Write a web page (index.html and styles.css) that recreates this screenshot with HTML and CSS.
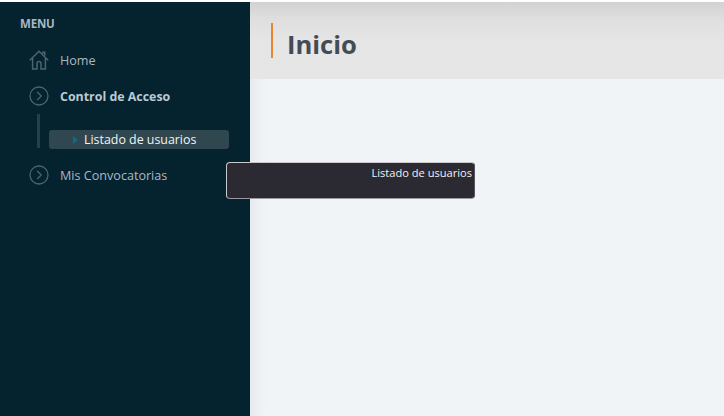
FILE: index.html
```html
<!DOCTYPE html>
<html lang="es">
<head>
<meta charset="utf-8">
<title>Inicio</title>
<link rel="stylesheet" href="styles.css">
</head>
<body>
<div class="app">
  <aside class="sidebar">
    <div class="menu-title">MENU</div>
    <nav class="nav">
      <a class="nav-item home">
        <svg class="icon" viewBox="0 0 20 20" fill="none" stroke="#4b6472" stroke-width="1.5"><path d="M0.8 10.2 10 1.2l9.2 9M3.6 8v11h4.4v-5.4a2 2 0 0 1 4 0V19h4.4V8M13.8 3.8V2.2h2v3.4"/></svg>
        <span>Home</span>
      </a>
      <a class="nav-item access">
        <svg class="icon" viewBox="0 0 20 20" fill="none" stroke="#4b6472" stroke-width="1.3"><circle cx="10" cy="10" r="9"/><path d="M8.2 6l4 4-4 4"/></svg>
        <strong>Control de Acceso</strong>
      </a>
      <div class="submenu">
        <a class="sub-item"><i class="arrow"></i><span>Listado de usuarios</span></a>
      </div>
      <a class="nav-item calls">
        <svg class="icon" viewBox="0 0 20 20" fill="none" stroke="#4b6472" stroke-width="1.3"><circle cx="10" cy="10" r="9"/><path d="M8.2 6l4 4-4 4"/></svg>
        <span>Mis Convocatorias</span>
      </a>
    </nav>
  </aside>
  <main class="content">
    <header class="page-head">
      <h1>Inicio</h1>
    </header>
  </main>
  <div class="tooltip">Listado de usuarios</div>
</div>
</body>
</html>
```
FILE: styles.css
```css
* { box-sizing: border-box; }
html, body { margin: 0; height: 100%; overflow: hidden; background: #fff; }
body { font-family: "Open Sans", "Noto Sans", sans-serif; }
.app { position: relative; display: flex; height: 416px; padding-top: 2px; }
.sidebar { width: 250px; flex: none; background: #05222f; padding: 14px 0 0 20px; }
.menu-title { font-size: 11.5px; line-height: 16px; font-weight: 700; color: #a9b7c0; letter-spacing: -0.2px; }
.nav { display: flex; flex-direction: column; margin-top: 18px; }
.nav-item { display: flex; align-items: center; gap: 11px; height: 20px; margin-left: 9px; font-size: 12.6px; color: #a9b9c4; }
.nav-item strong { font-weight: 700; font-size: 12.4px; color: #bccad3; }
.icon { width: 20px; height: 20px; flex: none; }
.home { margin-bottom: 16px; }
.submenu { margin: 8px 0 17px 17px; height: 34px; border-left: 3px solid #24404d; position: relative; }
.sub-item { position: absolute; left: 9px; top: 16px; width: 180px; height: 19px; border-radius: 3px; background: #31474f; color: #f0f4f6; font-size: 12.4px; line-height: 19px; display: flex; align-items: center; padding-left: 24px; }
.arrow { width: 0; height: 0; border-left: 5px solid #0d6b8f; border-top: 4px solid transparent; border-bottom: 4px solid transparent; margin-right: 6px; }
.content { flex: 1; background: #f0f4f7; box-shadow: inset 14px 0 14px -10px #e4e6e9; }
.page-head { height: 77px; background: linear-gradient(#d2d2d2, #dfdfdf 22%, #e6e5e6 50%, #e7e6e7 100%); padding-top: 21px; padding-left: 21px; }
.page-head h1 { margin: 0; height: 35px; border-left: 2px solid #e8852f; padding-left: 14px; font-size: 25.6px; line-height: 43px; font-weight: 700; color: #434b55; }
.tooltip { position: absolute; left: 226px; top: 162px; width: 249px; height: 37px; background: #2b2932; border: 1px solid #c9c9cd; border-right-color: #55535c; border-bottom-color: #9a99a0; border-radius: 4px; color: #f2f2f5; font-size: 11.1px; line-height: 19px; text-align: right; padding-right: 2px; }
```
